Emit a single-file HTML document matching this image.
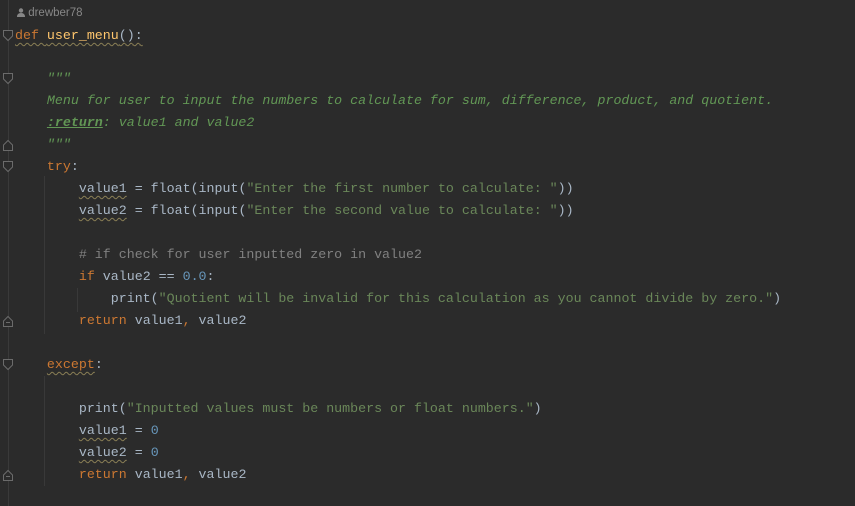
<!DOCTYPE html>
<html><head><meta charset="utf-8"><style>
body{margin:0;width:855px;height:506px;background:#2b2b2b;overflow:hidden;position:relative;font-family:"Liberation Mono",monospace;font-size:13.3px;color:#a9b7c6}
.l{position:absolute;left:15px;height:22px;line-height:22px;white-space:pre}
.k{color:#cc7832}.f{color:#ffc66d}.d{color:#629755;font-style:italic}.s{color:#6a8759}.n{color:#6897bb}.c{color:#808080}
.w{text-decoration:underline wavy #8a7f55;text-decoration-thickness:1px;text-underline-offset:3px}
.g{position:absolute;width:1px;background:#393939}
</style></head><body>
<div class="g" style="left:8px;top:0;height:506px;background:#3a3a3a"></div>
<div class="g" style="left:44px;top:176px;height:158px"></div>
<div class="g" style="left:44px;top:376px;height:110px"></div>
<div class="g" style="left:77px;top:288px;height:24px"></div>
<svg style="position:absolute;left:3px;top:30px" width="11" height="12"><path d="M0.5 0.5H9.5V6L5 10.5L0.5 6Z" fill="#2b2b2b" stroke="#6b6b6b"/></svg>
<svg style="position:absolute;left:3px;top:73px" width="11" height="12"><path d="M0.5 0.5H9.5V6L5 10.5L0.5 6Z" fill="#2b2b2b" stroke="#6b6b6b"/></svg>
<svg style="position:absolute;left:3px;top:139px" width="11" height="12"><path d="M0.5 11.5H9.5V6L5 1.5L0.5 6Z" fill="#2b2b2b" stroke="#6b6b6b"/></svg>
<svg style="position:absolute;left:3px;top:161px" width="11" height="12"><path d="M0.5 0.5H9.5V6L5 10.5L0.5 6Z" fill="#2b2b2b" stroke="#6b6b6b"/></svg>
<svg style="position:absolute;left:3px;top:315px" width="11" height="12"><path d="M0.5 11.5H9.5V6L5 1.5L0.5 6Z M3 7.5H7" fill="#2b2b2b" stroke="#6b6b6b"/></svg>
<svg style="position:absolute;left:3px;top:359px" width="11" height="12"><path d="M0.5 0.5H9.5V6L5 10.5L0.5 6Z" fill="#2b2b2b" stroke="#6b6b6b"/></svg>
<svg style="position:absolute;left:3px;top:469px" width="11" height="12"><path d="M0.5 11.5H9.5V6L5 1.5L0.5 6Z M3 7.5H7" fill="#2b2b2b" stroke="#6b6b6b"/></svg>
<div style="position:absolute;left:17px;top:5px;font-family:'Liberation Sans',sans-serif;font-size:11.5px;color:#878787;line-height:16px"><svg width="8" height="9" style="vertical-align:-1px"><circle cx="4" cy="2.5" r="2.2" fill="#878787"/><path d="M0 9Q0 5 4 5Q8 5 8 9Z" fill="#878787"/></svg> drewber78</div>
<div class="l" style="top:25px"><span class="k w">def </span><span class="f w">user_menu</span><span class="w">():</span></div>
<div class="l d" style="top:68px">    """</div>
<div class="l d" style="top:90px">    Menu for user to input the numbers to calculate for sum, difference, product, and quotient.</div>
<div class="l d" style="top:112px">    <b style="text-decoration:underline">:return</b>: value1 and value2</div>
<div class="l d" style="top:134px">    """</div>
<div class="l" style="top:156px">    <span class="k">try</span>:</div>
<div class="l" style="top:178px">        <span class="w">value1</span> = float(input(<span class="s">"Enter the first number to calculate: "</span>))</div>
<div class="l" style="top:200px">        <span class="w">value2</span> = float(input(<span class="s">"Enter the second value to calculate: "</span>))</div>
<div class="l c" style="top:244px">        # if check for user inputted zero in value2</div>
<div class="l" style="top:266px">        <span class="k">if</span> value2 == <span class="n">0.0</span>:</div>
<div class="l" style="top:288px">            print(<span class="s">"Quotient will be invalid for this calculation as you cannot divide by zero."</span>)</div>
<div class="l" style="top:310px">        <span class="k">return</span> value1<span class="k">,</span> value2</div>
<div class="l" style="top:354px">    <span class="k w">except</span>:</div>
<div class="l" style="top:398px">        print(<span class="s">"Inputted values must be numbers or float numbers."</span>)</div>
<div class="l" style="top:420px">        <span class="w">value1</span> = <span class="n">0</span></div>
<div class="l" style="top:442px">        <span class="w">value2</span> = <span class="n">0</span></div>
<div class="l" style="top:464px">        <span class="k">return</span> value1<span class="k">,</span> value2</div>
</body></html>
